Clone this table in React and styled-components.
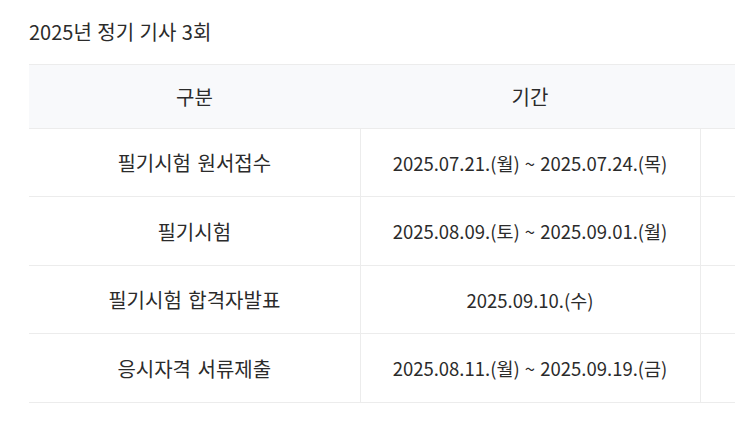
import React from "react";
import styled, { createGlobalStyle } from "styled-components";

const Global = createGlobalStyle`
  html, body { margin: 0; padding: 0; background: #fff; overflow: hidden; }
  body { font-family: "Noto Sans CJK KR", "Noto Sans", sans-serif; color: #333; }
`;

const Page = styled.div`
  padding: 20px 0 0 29px;
  width: 1100px;
`;

const Title = styled.h3`
  margin: 0;
  font-size: 20px;
  font-weight: 400;
  line-height: 24px;
  word-spacing: 1px;
  color: #2b2b2b;
`;

const Table = styled.table`
  margin-top: 20px;
  border-collapse: collapse;
  table-layout: fixed;
  width: 971px;
  color: #2b2b2b;
`;

const Th = styled.th`
  height: 63px;
  padding: 0;
  background: #f8f9fb;
  border-top: 1px solid #ececec;
  border-bottom: 1px solid #ececec;
  font-size: 20px;
  font-weight: 400;
  text-align: center;
`;

const Td = styled.td`
  height: ${(p) => p.$h}px;
  padding: 0;
  text-align: center;
  font-size: ${(p) => (p.$date ? "18.5px" : "20px")};
  word-spacing: ${(p) => (p.$date ? "1px" : "2px")};
  border-bottom: 1px solid #ececec;
  border-left: ${(p) => (p.$first ? "none" : "1px solid #ececec")};
`;

const rows = [
  ["필기시험 원서접수", "2025.07.21.(월) ~ 2025.07.24.(목)", 67],
  ["필기시험", "2025.08.09.(토) ~ 2025.09.01.(월)", 68],
  ["필기시험 합격자발표", "2025.09.10.(수)", 67],
  ["응시자격 서류제출", "2025.08.11.(월) ~ 2025.09.19.(금)", 68],
];

export default function App() {
  return (
    <>
      <Global />
      <Page>
        <Title>2025년 정기 기사 3회</Title>
        <Table>
          <colgroup>
            <col style={{ width: 331 }} />
            <col style={{ width: 340 }} />
            <col style={{ width: 300 }} />
          </colgroup>
          <thead>
            <tr>
              <Th>구분</Th>
              <Th>기간</Th>
              <Th />
            </tr>
          </thead>
          <tbody>
            {rows.map(([a, b, h]) => (
              <tr key={a}>
                <Td $first $h={h}>{a}</Td>
                <Td $date $h={h}>{b}</Td>
                <Td $h={h} />
              </tr>
            ))}
          </tbody>
        </Table>
      </Page>
    </>
  );
}
